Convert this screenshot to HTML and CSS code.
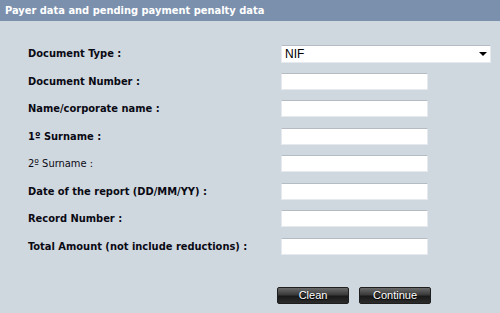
FILE: index.html
```html
<!DOCTYPE html>
<html lang="en">

<head>
    <meta charset="utf-8" />
    <title>Payer data</title>
    <link rel="stylesheet" href="styles.css">
</head>

<body>
    <div class="Page">
        <div class="Header">Payer data and pending payment penalty data</div>
        <div class="Form">
            <label class="Label">Document Type :</label>
            <div class="Select">
                <span>NIF</span>
                <span class="Arrow"></span>
            </div>
            <label class="Label">Document Number :</label>
            <div class="Field"><input class="Input" type="text"></div>
            <label class="Label">Name/corporate name :</label>
            <div class="Field"><input class="Input" type="text"></div>
            <label class="Label">1º Surname :</label>
            <div class="Field"><input class="Input" type="text"></div>
            <label class="Label Light">2º Surname :</label>
            <div class="Field"><input class="Input" type="text"></div>
            <label class="Label">Date of the report (DD/MM/YY) :</label>
            <div class="Field"><input class="Input" type="text"></div>
            <label class="Label">Record Number :</label>
            <div class="Field"><input class="Input" type="text"></div>
            <label class="Label">Total Amount (not include reductions) :</label>
            <div class="Field"><input class="Input" type="text"></div>
        </div>
        <div class="Buttons">
            <button class="Button" type="button">Clean</button>
            <button class="Button" type="button">Continue</button>
        </div>
    </div>
</body>

</html>
```

FILE: styles.css
```css
html,
body {
    margin: 0;
    padding: 0;
}

body {
    background: #d0d8df;
    font-family: "DejaVu Sans Condensed", "DejaVu Sans", sans-serif;
    color: #000000;
}

.Page {
    width: 500px;
    height: 313px;
}

.Header {
    height: 21px;
    line-height: 21px;
    background: #7b90ad;
    color: #ffffff;
    font-size: 11px;
    font-weight: bold;
    padding-left: 5px;
    box-sizing: border-box;
}

.Form {
    display: grid;
    grid-template-columns: 253px 210px;
    grid-auto-rows: 17px;
    row-gap: 10.5px;
    padding: 24px 0 0 28px;
}

.Label {
    font-size: 11px;
    font-weight: bold;
    display: flex;
    align-items: center;
    white-space: nowrap;
    color: #0a0a14;
}

.Label.Light {
    font-weight: normal;
}

.Select {
    height: 18px;
    box-sizing: border-box;
    background: #ffffff;
    border: 1px solid #e6eaee;
    border-top-color: #b4bbc3;
    display: flex;
    align-items: center;
    justify-content: space-between;
    padding: 0 3px 0 3px;
    font-family: "Liberation Sans", Arial, sans-serif;
    font-size: 12px;
}

.Arrow {
    width: 0;
    height: 0;
    border-left: 4px solid transparent;
    border-right: 4px solid transparent;
    border-top: 4px solid #000000;
}

.Field {
    display: flex;
}

.Input {
    width: 147px;
    height: 17px;
    box-sizing: border-box;
    margin: 0;
    padding: 0 3px;
    background: #ffffff;
    border: 1px solid #e6eaee;
    border-top-color: #b4bbc3;
    outline: none;
}

.Buttons {
    display: flex;
    gap: 10px;
    padding: 32px 0 0 277px;
}

.Button {
    width: 72px;
    height: 17px;
    padding: 0;
    border: 1px solid #1e1e1e;
    border-radius: 2px;
    background: linear-gradient(to bottom, #6a6a6a 0%, #3a3a3a 45%, #1a1a1a 55%, #2c2c2c 100%);
    color: #ffffff;
    font-family: "Liberation Sans", Arial, sans-serif;
    font-size: 11px;
    text-shadow: 0 1px 1px #000000;
}
```
